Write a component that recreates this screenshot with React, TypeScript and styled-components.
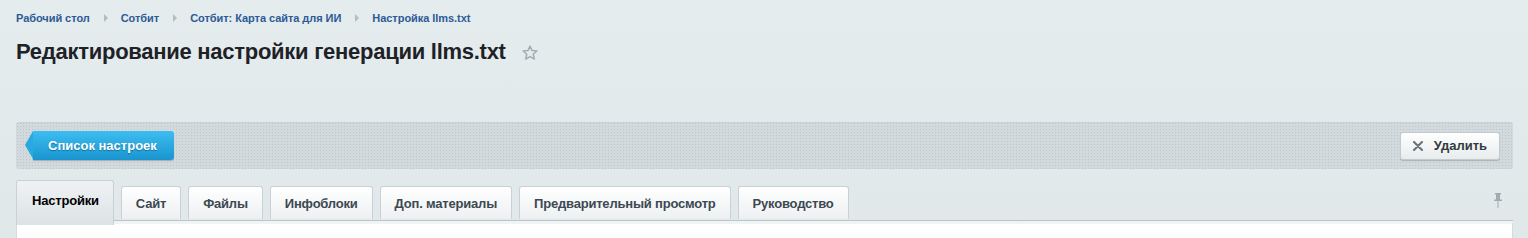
import React from "react";
import styled, { createGlobalStyle } from "styled-components";

const Global = createGlobalStyle`
  html, body {
    margin: 0;
    padding: 0;
    background: #e3eaec;
    font-family: "Liberation Sans", Arial, sans-serif;
  }
`;

// Basic
const Page = styled.div`
  padding: 0 15px 0 16px;
  height: 238px;
  overflow: hidden;
  background: linear-gradient(to bottom, #e5ecee, #e0e8ea);
`;
const Crumbs = styled.nav`
  display: flex;
  align-items: center;
  height: 36px;
  font-size: 11px;
  font-weight: bold;
  letter-spacing: -0.05px;
`;
const Crumb = styled.a`
  color: #2c5a96;
  text-decoration: none;
`;
const CrumbArrow = styled.span`
  display: inline-block;
  width: 0;
  height: 0;
  margin: 0 13px 0 14px;
  border-left: 4px solid #b3bcc1;
  border-top: 4px solid transparent;
  border-bottom: 4px solid transparent;
`;
const TitleRow = styled.div`
  display: flex;
  align-items: center;
  height: 32px;
`;
const Title = styled.h1`
  margin: 0;
  font-size: 22px;
  font-weight: bold;
  color: #1e2226;
  letter-spacing: -0.27px;
`;
const Star = styled.svg`
  margin-left: 15px;
  margin-top: 2px;
`;

// Toolbar
const Toolbar = styled.div`
  margin-top: 54px;
  height: 47px;
  border-radius: 3px;
  display: flex;
  align-items: center;
  justify-content: space-between;
  padding: 0 13px 0 9px;
  background-color: #d3dadd;
  background-image: radial-gradient(#bcc5ca 0.7px, transparent 0.8px);
  background-size: 3px 3px;
  box-shadow: inset 0 1px 0 rgba(0, 0, 0, 0.04);
`;
const BackButton = styled.button`
  position: relative;
  height: 29px;
  margin-left: 8px;
  padding: 0 17px 0 15px;
  border: none;
  border-radius: 0 3px 3px 0;
  background: linear-gradient(to bottom, #3cbdf0, #1a95cf);
  color: #fff;
  font-family: inherit;
  font-size: 13px;
  font-weight: bold;
  text-shadow: 0 1px 1px rgba(0, 60, 110, 0.5);
  box-shadow: 0 1px 1px rgba(0, 40, 80, 0.25);
  &::before {
    content: "";
    position: absolute;
    left: -8px;
    top: 0;
    width: 0;
    height: 0;
    border-right: 8px solid #2aa8e0;
    border-top: 14.5px solid transparent;
    border-bottom: 14.5px solid transparent;
  }
`;
const DeleteButton = styled.button`
  display: flex;
  align-items: center;
  gap: 11px;
  height: 28px;
  padding: 0 12px 0 12px;
  border: 1px solid #c2cacf;
  border-radius: 3px;
  background: linear-gradient(to bottom, #ffffff, #e8eced);
  box-shadow: 0 1px 1px rgba(0, 0, 0, 0.18);
  color: #333a40;
  font-family: inherit;
  font-size: 13px;
  font-weight: bold;
`;

// Tabs
const TabsRow = styled.div`
  margin-top: 11px;
  display: flex;
  align-items: flex-end;
  gap: 7px;
  height: 39px;
`;
const Tab = styled.div<{ $active?: boolean }>`
  display: flex;
  align-items: center;
  justify-content: center;
  box-sizing: border-box;
  height: ${(p) => (p.$active ? 45 : 33)}px;
  margin-bottom: ${(p) => (p.$active ? -6 : 0)}px;
  padding: ${(p) => (p.$active ? "0 14px 6px 15px" : "0 14px")};
  border: 1px solid #c9d1d5;
  border-bottom: none;
  border-radius: 3px 3px 0 0;
  background: ${(p) =>
    p.$active
      ? "linear-gradient(to bottom, #eef2f3, #dce3e5)"
      : "linear-gradient(to bottom, #ffffff, #edf0f1)"};
  color: ${(p) => (p.$active ? "#000" : "#3c4852")};
  font-size: 13px;
  font-weight: bold;
  letter-spacing: -0.2px;
  position: relative;
  z-index: ${(p) => (p.$active ? 2 : 0)};
`;
const Spacer = styled.div`
  flex: 1;
`;
const Pin = styled.svg`
  align-self: center;
  margin-right: 10px;
  margin-top: 2px;
`;
const Content = styled.div`
  height: 20px;
  border-top: 3px solid #f1f4f5;
  box-shadow: 0 -1px 0 #bcc6ca;
  margin-top: 2px;
  background: #fff;
  border-left: 1px solid #d5dcdf;
  border-right: 1px solid #d5dcdf;
  position: relative;
  z-index: 1;
`;

const crumbs = [
  "Рабочий стол",
  "Сотбит",
  "Сотбит: Карта сайта для ИИ",
  "Настройка llms.txt",
];
const tabs = [
  "Настройки",
  "Сайт",
  "Файлы",
  "Инфоблоки",
  "Доп. материалы",
  "Предварительный просмотр",
  "Руководство",
];

const App = () => {
  return (
    <>
      <Global />
      <Page>
        <Crumbs>
          {crumbs.map((c, i) => (
            <React.Fragment key={c}>
              {i > 0 && <CrumbArrow />}
              <Crumb href="#">{c}</Crumb>
            </React.Fragment>
          ))}
        </Crumbs>
        <TitleRow>
          <Title>Редактирование настройки генерации llms.txt</Title>
          <Star width="18" height="18" viewBox="0 0 24 24">
            <path
              d="M12 2.8l2.7 6 6.5.6-4.9 4.3 1.5 6.4L12 16.8l-5.8 3.3 1.5-6.4-4.9-4.3 6.5-.6z"
              fill="none"
              stroke="#a3adb3"
              strokeWidth="2"
              strokeLinejoin="round"
            />
          </Star>
        </TitleRow>
        <Toolbar>
          <BackButton>Список настроек</BackButton>
          <DeleteButton>
            <svg width="10" height="10" viewBox="0 0 10 10">
              <path
                d="M1 1L9 9M9 1L1 9"
                stroke="#6d767c"
                strokeWidth="2.2"
                strokeLinecap="round"
              />
            </svg>
            Удалить
          </DeleteButton>
        </Toolbar>
        <TabsRow>
          {tabs.map((t, i) => (
            <Tab key={t} $active={i === 0}>
              {t}
            </Tab>
          ))}
          <Spacer />
          <Pin width="10" height="17" viewBox="0 0 10 17">
            <path d="M2 1h6v1.5H7v5h2v1.5H1V7.5h2v-5H2z" fill="#a1abb0" />
            <path d="M5 9v7" stroke="#a1abb0" strokeWidth="1" />
          </Pin>
        </TabsRow>
        <Content />
      </Page>
    </>
  );
};

export default App;
